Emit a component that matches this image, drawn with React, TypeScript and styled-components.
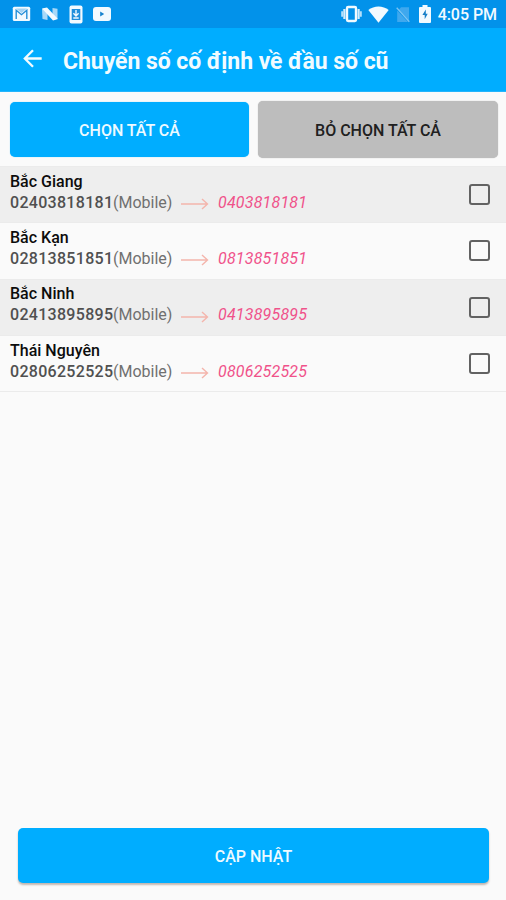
import React from "react";
import styled, { createGlobalStyle } from "styled-components";

const GlobalStyle = createGlobalStyle`
  *, *::before, *::after { box-sizing: border-box; }
  body { margin: 0; background: #fafafa; font-family: Roboto, "Noto Sans", sans-serif; }
  button { font-family: inherit; }
`;

const Screen = styled.div`
  display: flex;
  flex-direction: column;
  width: 506px;
  height: 900px;
  overflow: hidden;
  background: #fafafa;
`;

const StatusBar = styled.header`
  display: flex;
  align-items: center;
  justify-content: space-between;
  flex: none;
  height: 28px;
  padding: 0 9px 0 12px;
  background: #0292ea;
  color: #f2faff;
`;

const StatusGroup = styled.div<{ $gap: number }>`
  display: flex;
  align-items: center;
  gap: ${(p) => p.$gap}px;

  svg { display: block; flex: none; }
`;

const Clock = styled.span`
  margin-left: -2px;
  padding-top: 1px;
  font-size: 16px;
  font-weight: 500;
  line-height: 28px;
  letter-spacing: -0.05px;
  white-space: nowrap;
`;

const AppBar = styled.div`
  display: flex;
  align-items: center;
  flex: none;
  height: 64px;
  padding: 0 0 3px 23px;
  background: #00adff;
  border-bottom: 1px solid #24b5fb;
  color: #f1fbff;
`;

const BackButton = styled.button`
  display: block;
  width: 19px;
  height: 19px;
  margin: 0 21px 0 0;
  padding: 0;
  border: 0;
  background: none;
  color: inherit;

  svg { display: block; }
`;

const Title = styled.h1`
  margin: 8px 0 0;
  font-size: 23px;
  font-weight: 700;
  line-height: 32px;
  letter-spacing: -0.05px;
  white-space: nowrap;
`;

const Actions = styled.div`
  display: grid;
  grid-template-columns: 239px 240px;
  gap: 9px;
  flex: none;
  height: 74px;
  padding: 10px 8px 9px 10px;
`;

const ActionButton = styled.button<{ $muted?: boolean }>`
  height: ${(p) => (p.$muted ? 57 : 55)}px;
  margin-top: ${(p) => (p.$muted ? -1 : 0)}px;
  padding: 1px 0 0;
  border: 0;
  border-radius: 5px;
  background: ${(p) => (p.$muted ? "#bdbdbd" : "#00adff")};
  box-shadow: 0 0 1px ${(p) => (p.$muted ? "#b0b0b0" : "#5cc7fb")};
  color: ${(p) => (p.$muted ? "#202020" : "#eefaff")};
  font-size: 16px;
  font-weight: 500;
  white-space: nowrap;
`;

const ContactList = styled.ul`
  flex: 1;
  margin: 0;
  padding: 0;
  list-style: none;
`;

const ContactRow = styled.li`
  display: flex;
  align-items: center;
  justify-content: space-between;
  height: 56.3px;
  padding: 0 16px 0 10px;
  border-top: 1px solid #ebebeb;

  &:nth-child(odd) { background: #eeeeee; }
  &:last-child { height: 57.3px; border-bottom: 1px solid #ebebeb; }
`;

const ContactText = styled.div`
  padding-bottom: 4px;
`;

const Place = styled.div`
  color: #0c0c0c;
  font-size: 16px;
  font-weight: 500;
  line-height: 20px;
  white-space: nowrap;
`;

const NumberLine = styled.div`
  display: flex;
  align-items: center;
  height: 22px;
  font-size: 16px;
  line-height: 22px;
  white-space: nowrap;
`;

const OldNumber = styled.span`
  width: 103px;
  color: #505050;
  font-weight: 500;
  letter-spacing: 0.3px;
`;

const PhoneType = styled.span`
  width: 68px;
  color: #707070;
`;

const Arrow = styled.svg`
  display: block;
  width: 28px;
  height: 12px;
  margin: 3px 9px 0 0;
`;

const NewNumber = styled.span`
  color: #f0528a;
  font-style: italic;
  letter-spacing: 0.2px;
`;

const CheckBox = styled.button`
  width: 21px;
  height: 21px;
  padding: 0;
  border: 2px solid #626262;
  border-radius: 3px;
  background: transparent;
`;

const Footer = styled.footer`
  flex: none;
  padding: 0 17px 17px 18px;
`;

const UpdateButton = styled.button`
  display: block;
  width: 100%;
  height: 55px;
  padding: 2px 0 0;
  border: 0;
  border-radius: 5px;
  background: #00adff;
  box-shadow: 0 2px 2px rgba(90, 60, 40, 0.35);
  color: #eefaff;
  font-size: 16px;
  font-weight: 500;
`;

const contacts = [
  { place: "Bắc Giang", from: "02403818181", to: "0403818181" },
  { place: "Bắc Kạn", from: "02813851851", to: "0813851851" },
  { place: "Bắc Ninh", from: "02413895895", to: "0413895895" },
  { place: "Thái Nguyên", from: "02806252525", to: "0806252525" },
];

const MailIcon = () => (
  <svg width="19" height="16" viewBox="0 0 19 16">
    <rect x="0.8" y="0.8" width="17.4" height="14.2" rx="1.5" fill="currentColor" />
    <path d="M4.2 13V4.2L9.5 8.7l5.3-4.5V13" fill="none" stroke="#258fd8" strokeWidth="1.4" />
    <path d="M4 2.6h11L9.5 7z" fill="#a3d3f4" />
  </svg>
);

const NougatIcon = () => (
  <svg width="18" height="16" viewBox="0 0 18 16">
    <path d="M1 3l4-1 1.5 1v11L1.5 13z" fill="#a7d8f8" />
    <path d="M11.5 2l5 .8V12l-3 2-2-1z" fill="#a7d8f8" />
    <path d="M1 2.5l5-1L17 13l-5 1.5z" fill="currentColor" />
  </svg>
);

const DownloadIcon = () => (
  <svg width="14" height="19" viewBox="0 0 14 19">
    <rect x="0.5" y="0.5" width="13" height="18" rx="2" fill="currentColor" />
    <rect x="2.7" y="4" width="8.6" height="11" fill="#218fdc" />
    <path d="M7 5v5.5M4.4 8.3L7 11l2.6-2.7M4.3 13h5.4" fill="none" stroke="currentColor" strokeWidth="1.4" />
  </svg>
);

const VideoIcon = () => (
  <svg width="18" height="14" viewBox="0 0 18 14">
    <rect width="18" height="14" rx="3" fill="currentColor" />
    <path d="M7.2 4.6v4.8L11.2 7z" fill="#1683cf" />
  </svg>
);

const VibrateIcon = () => (
  <svg width="21" height="18" viewBox="0 0 21 18">
    <rect x="6" y="2" width="9" height="14" rx="1.2" fill="none" stroke="currentColor" strokeWidth="2.4" />
    <path d="M3.4 4v10M17.6 4v10" stroke="#d5edfc" strokeWidth="2.2" />
    <path d="M1.2 6.2v5.6M19.8 6.2v5.6" stroke="#b5e0fa" strokeWidth="2" />
  </svg>
);

const WifiIcon = () => (
  <svg width="21" height="17" viewBox="0 0 21 17">
    <path d="M.3 4C6-.8 15-.8 20.7 4L10.5 16.7z" fill="currentColor" />
  </svg>
);

const NoSimIcon = () => (
  <svg width="14" height="17" viewBox="0 0 14 17">
    <path d="M5 1.2h8v13.3L3 3.6z" fill="#3fa8ee" />
    <path d="M1.2 4.5L12 16H1.2z" fill="#3fa8ee" />
    <path d="M.7 1.8L13.3 15.8" stroke="#7cc4f3" strokeWidth="1.3" />
  </svg>
);

const BatteryIcon = () => (
  <svg width="12" height="18" viewBox="0 0 12 18">
    <path d="M3.5 0h5v2H11q1 0 1 1v14q0 1-1 1H1q-1 0-1-1V3q0-1 1-1h2.5z" fill="currentColor" />
    <path d="M6.8 4.5L3.4 10h2.3v4.2L8.7 8.8H6.8z" fill="#167fc8" />
  </svg>
);

const BackIcon = () => (
  <svg width="19" height="19" viewBox="0 0 19 19" fill="none" stroke="currentColor" strokeWidth="2.3">
    <path d="M18.7 9.5H2M10 1.2L1.8 9.5l8.2 8.3" />
  </svg>
);

export default function App() {
  return (
    <Screen>
      <GlobalStyle />
      <StatusBar>
        <StatusGroup $gap={10}>
          <MailIcon />
          <NougatIcon />
          <DownloadIcon />
          <VideoIcon />
        </StatusGroup>
        <StatusGroup $gap={9}>
          <StatusGroup $gap={6}>
            <VibrateIcon />
            <StatusGroup $gap={7}>
              <WifiIcon />
              <NoSimIcon />
            </StatusGroup>
          </StatusGroup>
          <BatteryIcon />
          <Clock>4:05 PM</Clock>
        </StatusGroup>
      </StatusBar>
      <AppBar>
        <BackButton aria-label="Quay lại">
          <BackIcon />
        </BackButton>
        <Title>Chuyển số cố định về đầu số cũ</Title>
      </AppBar>
      <Actions>
        <ActionButton>CHỌN TẤT CẢ</ActionButton>
        <ActionButton $muted>BỎ CHỌN TẤT CẢ</ActionButton>
      </Actions>
      <ContactList>
        {contacts.map((c) => (
          <ContactRow key={c.from}>
            <ContactText>
              <Place>{c.place}</Place>
              <NumberLine>
                <OldNumber>{c.from}</OldNumber>
                <PhoneType>(Mobile)</PhoneType>
                <Arrow viewBox="0 0 28 12" fill="none" stroke="#f4b5ac" strokeWidth="1.4">
                  <path d="M0 6h26M21 1l5.5 5-5.5 5" />
                </Arrow>
                <NewNumber>{c.to}</NewNumber>
              </NumberLine>
            </ContactText>
            <CheckBox role="checkbox" aria-checked="false" aria-label={c.place} />
          </ContactRow>
        ))}
      </ContactList>
      <Footer>
        <UpdateButton>CẬP NHẬT</UpdateButton>
      </Footer>
    </Screen>
  );
}
